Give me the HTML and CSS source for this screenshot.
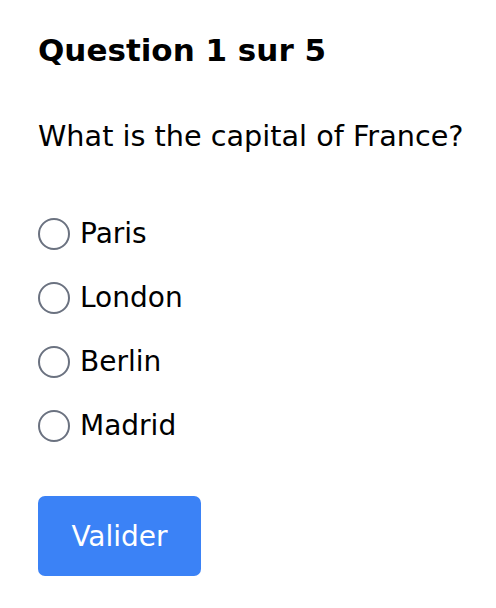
FILE: index.html
```html
<!DOCTYPE html>
<html lang="fr">
<head>
<meta charset="utf-8">
<link rel="stylesheet" href="styles.css">
</head>
<body>
<main class="quiz">
  <h1 class="quiz-title">Question 1 sur 5</h1>
  <p class="quiz-question">What is the capital of France?</p>
  <div class="options">
    <label class="option"><span class="radio"></span><span class="option-text">Paris</span></label>
    <label class="option"><span class="radio"></span><span class="option-text">London</span></label>
    <label class="option"><span class="radio"></span><span class="option-text">Berlin</span></label>
    <label class="option"><span class="radio"></span><span class="option-text">Madrid</span></label>
  </div>
  <button class="submit" type="button">Valider</button>
</main>
</body>
</html>
```
FILE: styles.css
```css
html, body {
  margin: 0;
  padding: 0;
  background: #ffffff;
}
body {
  font-family: "DejaVu Sans", "Open Sans", sans-serif;
  color: #000000;
}
.quiz {
  padding: 30px 24px 30px 38px;
  display: flex;
  flex-direction: column;
  align-items: flex-start;
}
.quiz-title {
  margin: 0;
  font-size: 31px;
  line-height: 40px;
  font-weight: 700;
}
.quiz-question {
  margin: 46px 0 0;
  font-size: 28.7px;
  line-height: 40px;
  font-weight: 400;
  white-space: nowrap;
}
.options {
  margin-top: 58px;
  display: flex;
  flex-direction: column;
  gap: 24px;
}
.option {
  display: flex;
  align-items: center;
  gap: 10px;
  height: 40px;
}
.radio {
  width: 32px;
  height: 32px;
  border: 2px solid #6b7280;
  border-radius: 50%;
  box-sizing: border-box;
  background: #fff;
}
.option-text {
  font-size: 28px;
  line-height: 40px;
}
.submit {
  margin-top: 50px;
  width: 163px;
  height: 80px;
  padding: 0;
  border: none;
  border-radius: 7px;
  background: #3b82f6;
  color: #ffffff;
  font-family: "DejaVu Sans", "Open Sans", sans-serif;
  font-size: 28px;
}
```
